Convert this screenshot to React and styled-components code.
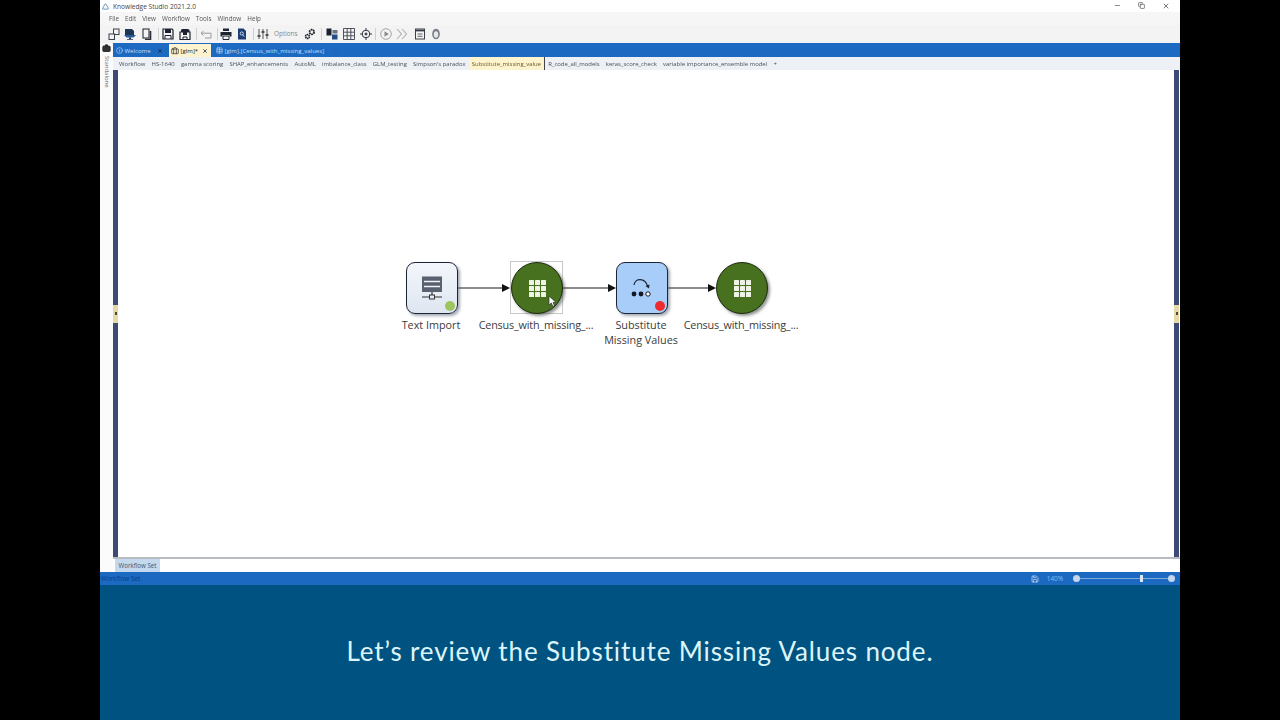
import React from "react"
import styled, { createGlobalStyle } from "styled-components"
import { Copy, Save, Info, X, Minus, Briefcase, Table, Triangle } from "lucide-react"

const Global = createGlobalStyle`
  html, body { margin: 0; padding: 0; background: #000; overflow: hidden; }
  body { font-family: "Open Sans", "Liberation Sans", sans-serif; }
`

const Frame = styled.div`
  width: 1080px;
  height: 720px;
  margin-left: 100px;
  display: flex;
  flex-direction: column;
  background: #fff;
`
const TitleBar = styled.div`
  height: 12px;
  display: flex;
  align-items: center;
  gap: 4px;
  padding: 0 0 0 2px;
  background: #fff;
  color: #444;
  font-size: 6.6px;
`
const WindowButtons = styled.div`
  margin-left: auto;
  display: flex;
  gap: 17px;
  padding-right: 10px;
  color: #333;
`
const MenuBar = styled.div`
  height: 13px;
  display: flex;
  align-items: center;
  gap: 6px;
  padding-left: 9px;
  background: #f6f6f6;
  color: #555;
  font-size: 6.3px;
  filter: blur(0.2px);
`
const Toolbar = styled.div`
  height: 18px;
  display: flex;
  align-items: center;
  padding: 0 0 1px 8px;
  box-sizing: border-box;
  background: #f3f3f3;
  color: #333;
`
const ToolIcon = styled.svg`
  flex: none;
  width: 12px;
  height: 12px;
  margin-left: ${(p) => p.$gap ?? 5}px;
`
const ToolSep = styled.span`
  width: 1px;
  height: 12px;
  margin-left: ${(p) => p.$gap ?? 5}px;
  background: #cfcfcf;
`
const OptionsLabel = styled.span`
  margin-left: 5px;
  width: 25px;
  color: #888;
  font-size: 6.4px;
`
const Workspace = styled.div`
  height: 529px;
  display: flex;
`
const SideStrip = styled.div`
  width: 13px;
  display: flex;
  flex-direction: column;
  align-items: center;
  gap: 3px;
  padding-top: 1px;
  box-sizing: border-box;
  background: #fbfbfb;
  color: #222;
`
const SideLabel = styled.span`
  writing-mode: vertical-rl;
  font-size: 6px;
  color: #666;
`
const Content = styled.div`
  flex: 1;
  min-width: 0;
  display: flex;
  flex-direction: column;
`
const TabBar = styled.div`
  height: 14px;
  display: flex;
  align-items: stretch;
  padding: 1px 0 0 1px;
  box-sizing: border-box;
  background: #1b69c1;
`
const DocTab = styled.div`
  width: ${(p) => p.$w}px;
  margin-left: ${(p) => p.$gap ?? 0}px;
  display: flex;
  align-items: center;
  gap: 1.5px;
  padding-left: 2px;
  box-sizing: border-box;
  background: ${(p) => (p.$active ? "#fdf3cf" : "transparent")};
  color: ${(p) => (p.$active ? "#222" : "#c9def7")};
  font-size: 6.05px;
  white-space: nowrap;
`
const TabClose = styled.span`
  display: flex;
  margin-left: auto;
  padding-right: ${(p) => p.$pad ?? 3}px;
  color: ${(p) => p.$color ?? "#10243f"};
`
const SubTabs = styled.div`
  height: 13px;
  display: flex;
  align-items: center;
  padding-left: 3px;
  background: #edf1f6;
  color: #4b4f58;
  font-size: 5.95px;
  white-space: nowrap;
  filter: blur(0.2px);
`
const SubTab = styled.span`
  display: flex;
  align-items: center;
  height: 100%;
  padding: 0 3.1px;
  background: ${(p) => (p.$active ? "#fdf3cf" : "transparent")};
  border-right: ${(p) => (p.$active ? "1px solid #444" : "0")};
  color: ${(p) => (p.$active ? "#6a5a20" : "inherit")};
`
const CanvasRow = styled.div`
  flex: 1;
  display: flex;
  min-height: 0;
  border-bottom: 2px solid #b9bcc0;
`
const Rail = styled.div`
  width: ${(p) => p.$w}px;
  display: flex;
  align-items: center;
  justify-content: center;
  background: #3d4a78;
`
const Grip = styled.div`
  width: 100%;
  height: 18px;
  display: flex;
  align-items: center;
  justify-content: center;
  background: #e6d9a6;
  &::after {
    content: "";
    width: 2px;
    height: 3px;
    background: #4a4a3a;
  }
`
const RightGap = styled.div`
  width: 1px;
  background: #fff;
`
const Canvas = styled.div`
  position: relative;
  flex: 1;
  background: #fff;
`
const Edges = styled.svg`
  position: absolute;
  inset: 0;
  width: 100%;
  height: 100%;
`
const Node = styled.div`
  position: absolute;
  left: ${(p) => p.$x}px;
  top: 192px;
  width: 52px;
  height: 52px;
  display: flex;
  align-items: center;
  justify-content: center;
  box-sizing: border-box;
`
const NodeBox = styled(Node)`
  border: 1.5px solid #1d2433;
  border-radius: 9px;
  background: ${(p) => p.$bg};
  box-shadow: 2px 2px 3px rgba(90, 100, 120, 0.55);
`
const NodeCircle = styled(Node)`
  border: 1.5px solid #1c2a12;
  border-radius: 50%;
  background: #47701f;
  box-shadow: 2px 2px 3px rgba(70, 80, 70, 0.6);
`
const Selection = styled.div`
  position: absolute;
  left: ${(p) => p.$x}px;
  top: 191px;
  width: 53px;
  height: 53px;
  box-sizing: border-box;
  border: 1px solid #c9c9c9;
`
const StatusDot = styled.span`
  position: absolute;
  right: 2px;
  bottom: 2px;
  width: 10px;
  height: 10px;
  border-radius: 50%;
  background: ${(p) => p.$color};
`
const NodeLabel = styled.div`
  position: absolute;
  left: ${(p) => p.$cx - 70}px;
  top: 246.5px;
  width: 140px;
  text-align: center;
  color: #3c3c3c;
  font-size: 10.8px;
  line-height: 15px;
  letter-spacing: ${(p) => (p.$tight ? "-0.18px" : "0")};
`
const Pointer = styled.svg`
  position: absolute;
  left: 430px;
  top: 225px;
  display: block;
`
const BottomTabs = styled.div`
  height: 13px;
  padding-left: 2px;
  display: flex;
  background: #fff;
`
const SheetTab = styled.div`
  width: 45px;
  display: flex;
  align-items: center;
  justify-content: center;
  background: #c4d8ee;
  color: #44566c;
  font-size: 6.2px;
`
const StatusBar = styled.div`
  height: 13px;
  display: flex;
  align-items: center;
  padding: 0 8px 0 1px;
  background: #1b69c1;
  color: #0d3f85;
  font-size: 6.4px;
`
const ZoomText = styled.span`
  margin-left: auto;
  display: flex;
  align-items: center;
  gap: 8px;
  color: #8fb9e8;
`
const Slider = styled.div`
  position: relative;
  width: 96px;
  height: 1px;
  margin-left: 13px;
  background: #7fa8dc;
`
const SliderEnd = styled.span`
  position: absolute;
  top: -3px;
  left: ${(p) => p.$x}px;
  width: 7px;
  height: 7px;
  border-radius: 50%;
  background: #c4d6ec;
`
const SliderThumb = styled.span`
  position: absolute;
  top: -3px;
  left: 64px;
  width: 3px;
  height: 7px;
  background: #dbe6f4;
`
const Caption = styled.div`
  flex: 1;
  display: flex;
  align-items: center;
  justify-content: center;
  padding-bottom: 4px;
  background: #005380;
  color: #dcf5fb;
  font-family: Lato, "Open Sans", sans-serif;
  font-size: 26px;
  font-weight: 400;
  letter-spacing: 0.87px;
`

const subTabs = [
  "Workflow", "HS-1640", "gamma scoring", "SHAP_enhancements", "AutoML", "imbalance_class",
  "GLM_testing", "Simpson's paradox", "Substitute_missing_value", "R_code_all_models",
  "keras_score_check", "variable importance_ensemble model", "+",
]

// toolbar drawings, all on a 12 unit box
const toolIcons = {
  layout: (
    <g fill="none" stroke="#3a3f4a" strokeWidth="1">
      <rect x="5.5" y="1" width="5.5" height="5.5" />
      <rect x="1" y="6" width="5.5" height="5.5" fill="#f3f3f3" />
    </g>
  ),
  folder: (
    <g>
      <path d="M1 1h7l2 2v4H1z" fill="#1f3554" />
      <path d="M0 7h12l-2.5 2.5h-7z" fill="#245a96" />
      <path d="M5 9.5h2V11h2v.8H3V11h2z" fill="#1f3554" />
    </g>
  ),
  pages: (
    <g fill="none" stroke="#2b2f3a">
      <rect x="2" y="1" width="6" height="9" strokeWidth="1.1" />
      <path d="M9.5 3v8.5H4" strokeWidth="1.6" />
    </g>
  ),
  save: (
    <g>
      <path d="M1 1h9l1 1v9H1z" fill="none" stroke="#1d2230" strokeWidth="1.2" />
      <rect x="3" y="1" width="6" height="4" fill="#1d2230" />
      <path d="M3 11V7.5h6V11" fill="none" stroke="#1d2230" />
    </g>
  ),
  saveAll: (
    <g>
      <path d="M3 1h6l1.500 1v2H2V2z" fill="#1d2230" />
      <path d="M1 4h10v7.500H1z" fill="none" stroke="#1d2230" strokeWidth="1.2" />
      <rect x="4" y="4" width="4" height="3" fill="#1d2230" />
      <path d="M4 11.500V9h4v2.500" fill="none" stroke="#1d2230" />
    </g>
  ),
  undo: (
    <path d="M3.500 3L1 5.200l2.500 2.200M1 5.200h10V10H5" fill="none" stroke="#9a9a9a" strokeWidth="1" />
  ),
  printer: (
    <g fill="#1f2633">
      <path d="M3 0.500h6V3H3z" />
      <path d="M0.500 4h11v4.500H9.500V7h-7v1.500h-2z" />
      <path d="M3 8h6v3.500H3z" fill="none" stroke="#1f2633" />
    </g>
  ),
  docSearch: (
    <g>
      <path d="M2 0.500h5.500l2.500 2.500v8.500H2z" fill="#1c3f73" />
      <circle cx="5.800" cy="5.500" r="1.600" fill="none" stroke="#e6eef8" strokeWidth="0.8" />
      <path d="M6.800 6.800l1.500 2" stroke="#e6eef8" strokeWidth="0.8" />
    </g>
  ),
  sliders: (
    <g stroke="#555" strokeWidth="1">
      <path d="M2 1v10M6 1v10M10 1v10" />
      <path d="M0.500 8h3M4.500 4h3M8.500 7h3" strokeWidth="1.400" stroke="#333" />
    </g>
  ),
  gears: (
    <g fill="none" stroke="#1d2230">
      <circle cx="7.800" cy="4" r="2.300" strokeWidth="1.800" strokeDasharray="1.600 0.600" />
      <circle cx="3.500" cy="8.500" r="1.900" strokeWidth="1.700" strokeDasharray="1.300 0.500" />
    </g>
  ),
  cluster: (
    <g>
      <rect x="0.500" y="0.500" width="5" height="7" fill="#1d2230" />
      <rect x="6.500" y="2" width="5" height="3.500" fill="#6b7280" />
      <rect x="6" y="6.500" width="5.500" height="5" fill="#244f85" />
    </g>
  ),
  grid: (
    <path d="M0.500 0.500h11v11h-11zM0.500 4.200h11M0.500 7.800h11M4.200 0.500v11M7.800 0.500v11" fill="none" stroke="#3f4350" strokeWidth="0.9" />
  ),
  crosshair: (
    <g fill="none" stroke="#343845">
      <circle cx="6" cy="6" r="3.800" strokeWidth="1" />
      <path d="M6 0v3M6 9v3M0 6h3M9 6h3" strokeWidth="1" />
      <circle cx="6" cy="6" r="1" fill="#343845" />
    </g>
  ),
  play: (
    <g>
      <circle cx="6" cy="6" r="5.300" fill="none" stroke="#9a9a9a" strokeWidth="0.9" />
      <path d="M4.500 3.300L8.800 6l-4.300 2.700z" fill="#8a8a8a" />
    </g>
  ),
  chevrons: (
    <path d="M1 1l4.500 5L1 11M6 1l4.500 5L6 11" fill="none" stroke="#b0b0b0" strokeWidth="1.100" />
  ),
  listDoc: (
    <g fill="none" stroke="#3a3f4a">
      <rect x="1.500" y="1" width="9" height="10" strokeWidth="1" />
      <path d="M1.500 2.500h9" strokeWidth="1.800" />
      <path d="M3.500 6h5M3.500 8.300h5" strokeWidth="0.800" />
    </g>
  ),
  egg: (
    <g>
      <path d="M6 0.800c2.600 0 3.800 2.800 3.800 5.400 0 2.900-1.600 5-3.800 5s-3.800-2.100-3.800-5C2.200 3.600 3.400 0.800 6 0.800z" fill="#7a7f87" />
      <ellipse cx="6" cy="6.500" rx="2.200" ry="3.200" fill="#e5e7ea" />
    </g>
  ),
}

const Tool = ({ name, gap }) => (
  <ToolIcon viewBox="0 0 12 12" $gap={gap}>{toolIcons[name]}</ToolIcon>
)

const GridGlyph = () => (
  <svg width="17" height="17" viewBox="0 0 17 17" fill="#eef3e6">
    {[0, 6, 12].map((y) =>
      [0, 6, 12].map((x) => <rect key={`${x}-${y}`} x={x} y={y} width="5" height="5" rx="0.5" />)
    )}
  </svg>
)

const ImportGlyph = () => (
  <svg width="22" height="24" viewBox="0 0 22 24">
    <rect x="1" y="0.500" width="20" height="15.500" fill="#59606e" />
    <path d="M3 5.500h16M3 10.500h16" stroke="#f2f4f8" strokeWidth="1.300" />
    <path d="M11 16v3M1 21h7M14 21h7" stroke="#333" strokeWidth="1.200" />
    <rect x="8.500" y="19" width="5" height="4" fill="none" stroke="#333" strokeWidth="1" />
  </svg>
)

const SubstituteGlyph = () => (
  <svg width="22" height="24" viewBox="0 0 22 24">
    <path d="M3 9C4 2 14 1 17 11" fill="none" stroke="#1d2433" strokeWidth="1.200" />
    <path d="M14.500 10l3.500 2.500 0.500-4z" fill="#1d2433" />
    <circle cx="3" cy="18" r="2.400" fill="#141821" />
    <circle cx="10" cy="18" r="2.400" fill="#141821" />
    <circle cx="17" cy="18" r="2.200" fill="#fff" stroke="#141821" strokeWidth="1" />
  </svg>
)

const edges = [
  [340, 392],
  [445, 498],
  [550, 598],
]

export default function App() {
  return (
    <Frame>
      <Global />
      <TitleBar>
        <Triangle size={7} color="#2e6da4" strokeWidth={2.5} />
        <span>Knowledge Studio 2021.2.0</span>
        <WindowButtons>
          <Minus size={7} />
          <Copy size={7} />
          <X size={8} />
        </WindowButtons>
      </TitleBar>
      <MenuBar>
        {["File", "Edit", "View", "Workflow", "Tools", "Window", "Help"].map((m) => (
          <span key={m}>{m}</span>
        ))}
      </MenuBar>
      <Toolbar>
        <Tool name="layout" gap={0} />
        <Tool name="folder" gap={4} />
        <Tool name="pages" />
        <ToolSep />
        <Tool name="save" gap={3} />
        <Tool name="saveAll" />
        <ToolSep />
        <Tool name="undo" gap={3} />
        <ToolSep />
        <Tool name="printer" gap={2} />
        <Tool name="docSearch" gap={4} />
        <ToolSep />
        <Tool name="sliders" gap={3} />
        <OptionsLabel>Options</OptionsLabel>
        <Tool name="gears" />
        <ToolSep />
        <Tool name="cluster" gap={4} />
        <Tool name="grid" />
        <Tool name="crosshair" />
        <ToolSep $gap={3} />
        <Tool name="play" gap={4} />
        <Tool name="chevrons" gap={4} />
        <Tool name="listDoc" gap={6} />
        <Tool name="egg" gap={4} />
      </Toolbar>
      <Workspace>
        <SideStrip>
          <Briefcase size={9} fill="#333" />
          <SideLabel>Standalone</SideLabel>
        </SideStrip>
        <Content>
          <TabBar>
            <DocTab $w={55}>
              <Info size={7} />
              <span>Welcome</span>
              <TabClose $pad={6}><X size={6} strokeWidth={3} /></TabClose>
            </DocTab>
            <DocTab $w={42} $active>
              <Briefcase size={8} />
              <span>[glm]*</span>
              <TabClose><X size={6} strokeWidth={3} /></TabClose>
            </DocTab>
            <DocTab $w={128} $gap={3}>
              <Table size={7} />
              <span>[glm].[Census_with_missing_values]</span>
              <TabClose $pad={3} $color="#2a5da0"><X size={6} strokeWidth={3} /></TabClose>
            </DocTab>
          </TabBar>
          <SubTabs>
            {subTabs.map((t, i) => (
              <SubTab key={t} $active={i === 8}>{t}</SubTab>
            ))}
          </SubTabs>
          <CanvasRow>
            <Rail $w={5}><Grip /></Rail>
            <Canvas>
              <Edges>
                {edges.map(([a, b]) => (
                  <g key={a}>
                    <line x1={a} y1="218" x2={b - 6} y2="218" stroke="#1a1a1a" strokeWidth="1.2" />
                    <polygon points={`${b - 8},214 ${b},218 ${b - 8},222`} fill="#111" />
                  </g>
                ))}
              </Edges>
              <NodeBox $x={288} $bg="linear-gradient(#f3f6fb, #dfe6f1)">
                <ImportGlyph />
                <StatusDot $color="#9dc45f" />
              </NodeBox>
              <NodeLabel $cx={313}>Text Import</NodeLabel>
              <Selection $x={392} />
              <NodeCircle $x={393}><GridGlyph /></NodeCircle>
              <NodeLabel $cx={418} $tight>Census_with_missing_...</NodeLabel>
              <NodeBox $x={498} $bg="#a8cdf8">
                <SubstituteGlyph />
                <StatusDot $color="#ee2a2e" />
              </NodeBox>
              <NodeLabel $cx={523}>Substitute<br />Missing Values</NodeLabel>
              <NodeCircle $x={598}><GridGlyph /></NodeCircle>
              <NodeLabel $cx={623} $tight>Census_with_missing_...</NodeLabel>
              <Pointer width="9" height="13" viewBox="0 0 9 13">
                <path d="M1 1v9l2.300-2 1.600 3.400 1.600-.8L5 7.400h3z" fill="#fff" stroke="#333" strokeWidth="0.7" />
              </Pointer>
            </Canvas>
            <Rail $w={5}><Grip /></Rail>
            <RightGap />
          </CanvasRow>
          <BottomTabs>
            <SheetTab>Workflow Set</SheetTab>
          </BottomTabs>
        </Content>
      </Workspace>
      <StatusBar>
        <span>Workflow Set</span>
        <ZoomText>
          <Save size={8} color="#d9e6f5" />
          <span>140%</span>
        </ZoomText>
        <Slider>
          <SliderEnd $x={-3} />
          <SliderThumb />
          <SliderEnd $x={92} />
        </Slider>
      </StatusBar>
      <Caption>Let’s review the Substitute Missing Values node.</Caption>
    </Frame>
  )
}
